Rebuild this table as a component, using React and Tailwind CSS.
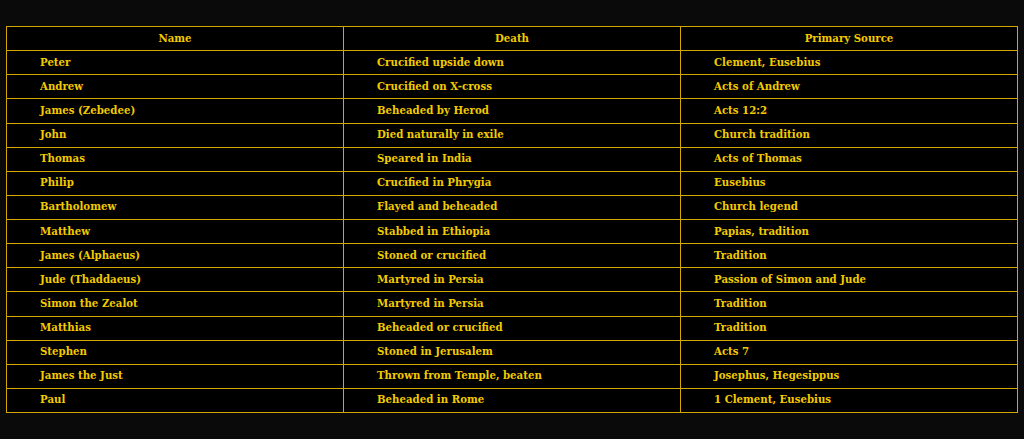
import React from "react";

const rows = [
  ["Peter", "Crucified upside down", "Clement, Eusebius"],
  ["Andrew", "Crucified on X-cross", "Acts of Andrew"],
  ["James (Zebedee)", "Beheaded by Herod", "Acts 12:2"],
  ["John", "Died naturally in exile", "Church tradition"],
  ["Thomas", "Speared in India", "Acts of Thomas"],
  ["Philip", "Crucified in Phrygia", "Eusebius"],
  ["Bartholomew", "Flayed and beheaded", "Church legend"],
  ["Matthew", "Stabbed in Ethiopia", "Papias, tradition"],
  ["James (Alphaeus)", "Stoned or crucified", "Tradition"],
  ["Jude (Thaddaeus)", "Martyred in Persia", "Passion of Simon and Jude"],
  ["Simon the Zealot", "Martyred in Persia", "Tradition"],
  ["Matthias", "Beheaded or crucified", "Tradition"],
  ["Stephen", "Stoned in Jerusalem", "Acts 7"],
  ["James the Just", "Thrown from Temple, beaten", "Josephus, Hegesippus"],
  ["Paul", "Beheaded in Rome", "1 Clement, Eusebius"],
];

export default function App() {
  return (
    <div
      className="w-[1024px] h-[439px] bg-[#0a0a0a] px-[6px] pt-[26px]"
      style={{ fontFamily: '"DejaVu Serif", serif' }}
    >
      <table className="w-[1012px] table-fixed border-collapse bg-black text-[10.2px] font-bold text-[#f2ca00]">
        <thead>
          <tr className="h-[24.125px]">
            {["Name", "Death", "Primary Source"].map((h) => (
              <th
                key={h}
                className="border border-[#d0a800] text-center font-bold pt-0 pb-[2px] px-0 leading-[20px]"
              >
                {h}
              </th>
            ))}
          </tr>
        </thead>
        <tbody>
          {rows.map((r, i) => (
            <tr key={i} className="h-[24.125px]">
              {r.map((c, j) => (
                <td
                  key={j}
                  className="border border-[#d0a800] pl-[33px] pt-0 pb-[2px] leading-[20px]"
                >
                  {c}
                </td>
              ))}
            </tr>
          ))}
        </tbody>
      </table>
    </div>
  );
}
